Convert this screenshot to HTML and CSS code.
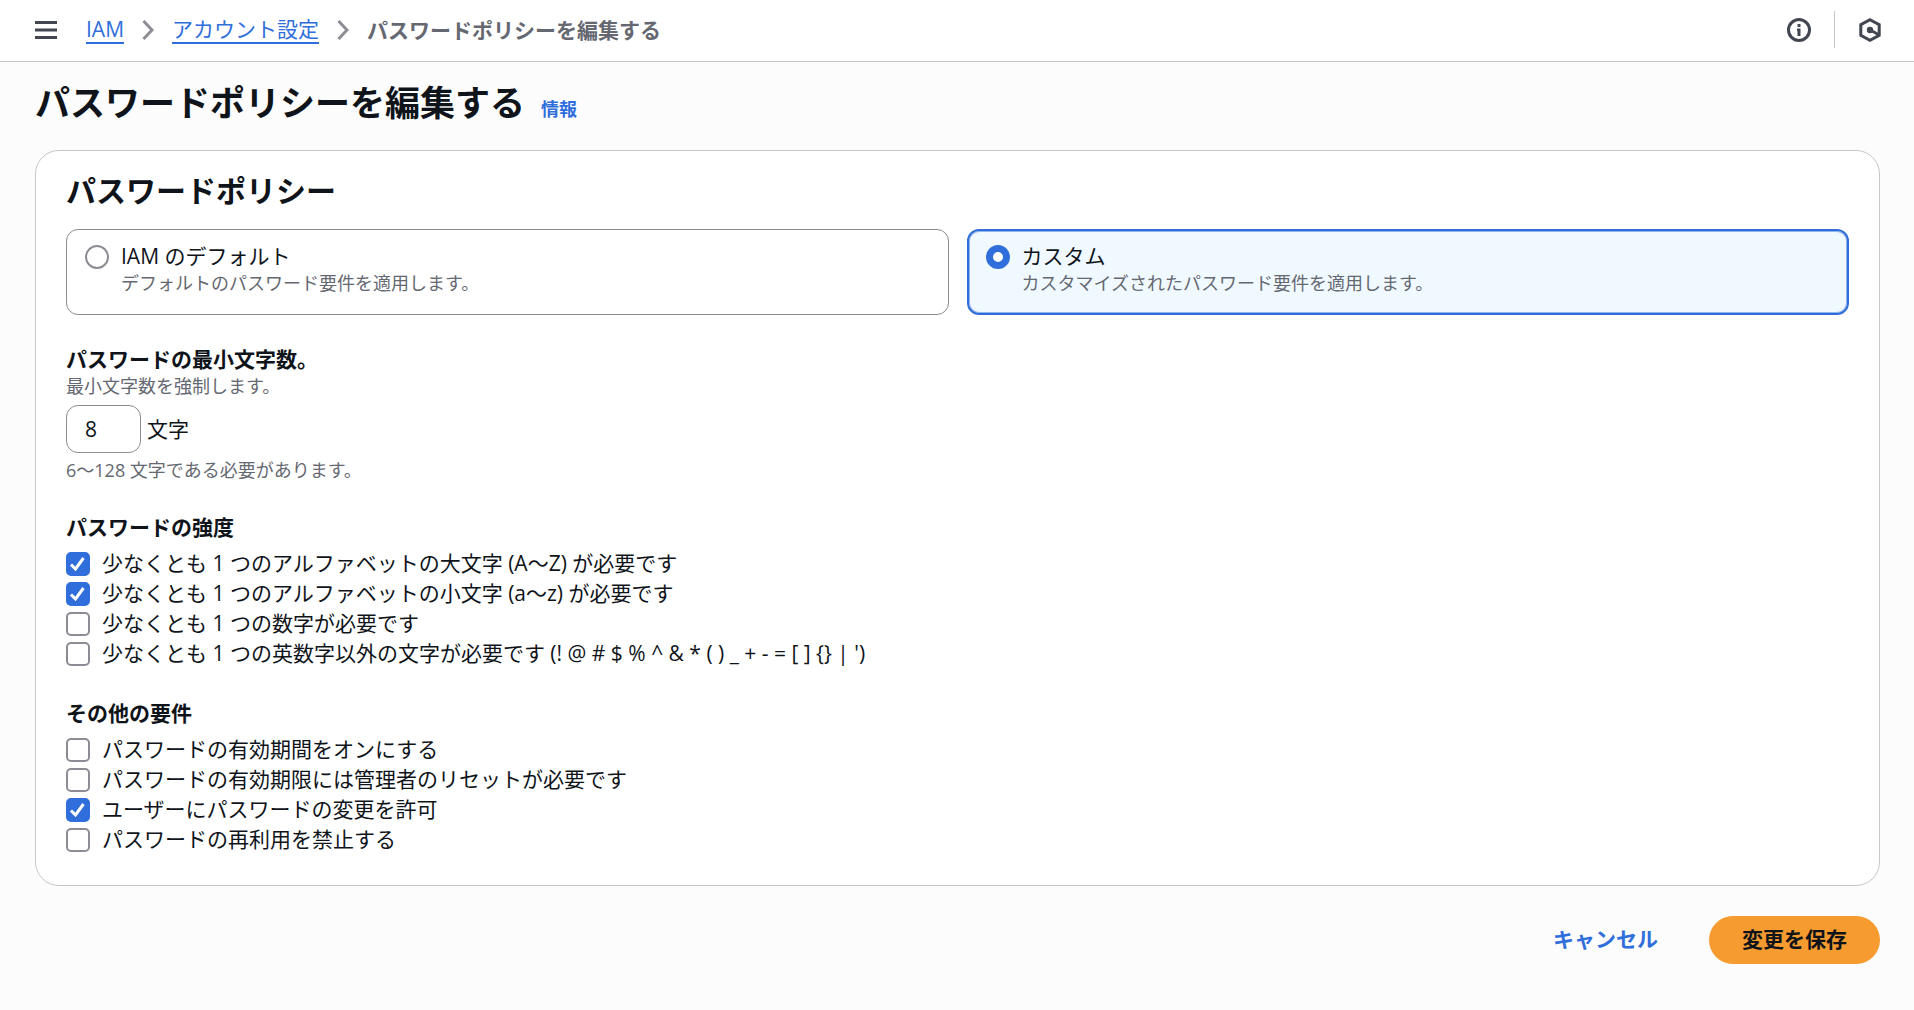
FILE: index.html
```html
<!DOCTYPE html>
<html lang="ja">
	<head>
		<meta charset="utf-8" />
		<title>パスワードポリシーを編集する</title>
		<link rel="stylesheet" href="styles.css">
	</head>
	<body>
		<header class="topbar">
			<button class="icon-btn" type="button" aria-label="メニュー">
				<svg width="22" height="24" viewBox="0 0 22 24"><path d="M0 4.5h22M0 12h22M0 19.5h22" stroke="currentColor" stroke-width="3"/></svg>
			</button>
			<nav class="breadcrumb">
				<a href="#">IAM</a>
				<svg class="chevron" width="12" height="20" viewBox="0 0 12 20"><path d="M1.5 1l8.5 9-8.5 9" fill="none" stroke="currentColor" stroke-width="3"/></svg>
				<a href="#">アカウント設定</a>
				<svg class="chevron" width="12" height="20" viewBox="0 0 12 20"><path d="M1.5 1l8.5 9-8.5 9" fill="none" stroke="currentColor" stroke-width="3"/></svg>
				<span class="current">パスワードポリシーを編集する</span>
			</nav>
			<div class="tools">
				<button class="icon-btn" type="button" aria-label="情報">
					<svg width="24" height="24" viewBox="0 0 24 24"><circle cx="12" cy="12" r="10.5" fill="none" stroke="currentColor" stroke-width="3"/><path d="M10.5 6h3v3h-3zM10 10.5h3.5V18h-3v-5H10z" fill="currentColor"/></svg>
				</button>
				<span class="divider"></span>
				<button class="icon-btn" type="button" aria-label="アシスタント">
					<svg width="24" height="24" viewBox="0 0 24 24"><path d="M12 1.7l9.2 5v10.6l-9.2 5-9.2-5V6.7z" fill="none" stroke="currentColor" stroke-width="3"/><circle cx="12" cy="12" r="3.2" fill="currentColor"/><path d="M12 12l8.5 4.5" stroke="currentColor" stroke-width="3"/></svg>
				</button>
			</div>
		</header>

		<main class="content">
			<div class="page-title">
				<h1>パスワードポリシーを編集する</h1>
				<a href="#">情報</a>
			</div>

			<form>
				<section class="card">
					<h2>パスワードポリシー</h2>

					<div class="tiles">
						<label class="tile">
							<input class="radio" type="radio" name="policy" />
							<span class="tile-text">
								<span>IAM のデフォルト</span>
								<span class="hint">デフォルトのパスワード要件を適用します。</span>
							</span>
						</label>
						<label class="tile selected">
							<input class="radio" type="radio" name="policy" checked />
							<span class="tile-text">
								<span>カスタム</span>
								<span class="hint">カスタマイズされたパスワード要件を適用します。</span>
							</span>
						</label>
					</div>

					<div class="field">
						<label class="field-label" for="min-length">パスワードの最小文字数。</label>
						<p class="hint">最小文字数を強制します。</p>
						<div class="length-row">
							<input class="length-input" id="min-length" type="text" inputmode="numeric" value="8" />
							<span>文字</span>
						</div>
						<p class="hint">6～128 文字である必要があります。</p>
					</div>

					<fieldset class="field">
						<legend class="field-label">パスワードの強度</legend>
						<div class="checks">
							<label class="check"><input type="checkbox" checked /><span>少なくとも 1 つのアルファベットの大文字 (A～Z) が必要です</span></label>
							<label class="check"><input type="checkbox" checked /><span>少なくとも 1 つのアルファベットの小文字 (a～z) が必要です</span></label>
							<label class="check"><input type="checkbox" /><span>少なくとも 1 つの数字が必要です</span></label>
							<label class="check"><input type="checkbox" /><span>少なくとも 1 つの英数字以外の文字が必要です (! @ # $ % ^ &amp; * ( ) _ + - = [ ] {} | ')</span></label>
						</div>
					</fieldset>

					<fieldset class="field">
						<legend class="field-label">その他の要件</legend>
						<div class="checks">
							<label class="check"><input type="checkbox" /><span>パスワードの有効期間をオンにする</span></label>
							<label class="check"><input type="checkbox" /><span>パスワードの有効期限には管理者のリセットが必要です</span></label>
							<label class="check"><input type="checkbox" checked /><span>ユーザーにパスワードの変更を許可</span></label>
							<label class="check"><input type="checkbox" /><span>パスワードの再利用を禁止する</span></label>
						</div>
					</fieldset>
				</section>

				<div class="actions">
					<button class="btn btn-link" type="button">キャンセル</button>
					<button class="btn btn-primary" type="submit">変更を保存</button>
				</div>
			</form>
		</main>
	</body>
</html>
```

FILE: styles.css
```css
*{
	box-sizing: border-box;
	margin: 0;
	padding: 0;
}

body{
	background-color: #fcfcfd;
	color: #0f141a;
	font-family: "Open Sans", "Noto Sans CJK JP", sans-serif;
	font-size: 21px;
	line-height: 30px;
}

a{
	color: #2f6edb;
	text-decoration: none;
}

svg{
	display: block;
}

input,button{
	font: inherit;
	color: inherit;
}

/* top bar */
.topbar{
	display: flex;
	align-items: center;
	height: 62px;
	padding: 0 32px 2px 35px;
	border-bottom: 1px solid #c6c6cd;
	background-color: #fff;
}

.icon-btn{
	border: none;
	background: none;
	color: #424650;
	cursor: pointer;
}

.breadcrumb{
	display: flex;
	align-items: center;
	gap: 18px;
	margin-left: 29px;
}

.breadcrumb a{
	line-height: 26px;
	border-bottom: 2px solid #2f6edb;
}

.chevron{
	color: #8c8c94;
}

.current{
	color: #656871;
	font-weight: 700;
}

.tools{
	display: flex;
	align-items: center;
	gap: 23px;
	margin-left: auto;
}

.divider{
	width: 1px;
	height: 37px;
	background-color: #c6c6cd;
}

/* page */
.content{
	padding: 18px 34px 46px 35px;
}

.page-title{
	display: flex;
	align-items: baseline;
	gap: 16px;
	margin-bottom: 24px;
}

.page-title h1{
	font-size: 35px;
	line-height: 46px;
}

.page-title a{
	font-size: 18px;
	font-weight: 700;
	line-height: 24px;
}

.card{
	padding: 22px 30px 31px;
	border: 1px solid #c6c6cd;
	border-radius: 24px;
	background-color: #fff;
}

.card h2{
	margin-bottom: 20px;
	font-size: 30px;
	line-height: 36px;
}

.tiles{
	display: grid;
	grid-template-columns: 1fr 1fr;
	gap: 18px;
	margin-bottom: 29px;
}

.tile{
	display: flex;
	gap: 12px;
	padding: 11px 18px 19px;
	border: 1px solid #8c8c94;
	border-radius: 12px;
	cursor: pointer;
}

.tile.selected{
	padding: 10px 17px 18px;
	border: 2px solid #2f6edb;
	background-color: #f0f9ff;
	box-shadow: inset 0 0 0 1px #8fb4ee;
}

.tile-text{
	display: flex;
	flex-direction: column;
}

.hint{
	color: #656871;
	font-size: 18px;
	line-height: 24px;
}

.radio{
	appearance: none;
	flex: none;
	width: 24px;
	height: 24px;
	margin-top: 4px;
	border: 2px solid #8c8c94;
	border-radius: 50%;
	background-color: #fff;
}

.radio:checked{
	border: 7px solid #2f6edb;
}

/* form fields */
.field{
	border: none;
}

.field + .field{
	margin-top: 30px;
}

.field-label{
	display: block;
	font-weight: 700;
}

.length-row{
	display: flex;
	align-items: center;
	gap: 6px;
	margin: 7px 0 5px;
}

.length-input{
	width: 75px;
	height: 48px;
	padding: 0 18px;
	border: 1px solid #8c8c94;
	border-radius: 12px;
	background-color: #fff;
}

.checks{
	display: flex;
	flex-direction: column;
	align-items: flex-start;
	margin-top: 6px;
}

.check{
	display: flex;
	gap: 12px;
	cursor: pointer;
}

.check input{
	appearance: none;
	flex: none;
	width: 24px;
	height: 24px;
	margin-top: 4px;
	border: 2px solid #8c8c94;
	border-radius: 5px;
	background-color: #fff;
}

.check input:checked{
	border-color: #2f6edb;
	background: #2f6edb url("data:image/svg+xml,%3Csvg xmlns='http://www.w3.org/2000/svg' viewBox='0 0 20 20'%3E%3Cpath d='M3 10.5l4.5 4.5 8-11' fill='none' stroke='white' stroke-width='3'/%3E%3C/svg%3E") center / 20px no-repeat;
}

/* buttons */
.actions{
	display: flex;
	justify-content: flex-end;
	gap: 18px;
	margin-top: 30px;
}

.btn{
	height: 48px;
	padding: 0 33px 2px;
	border: none;
	border-radius: 24px;
	font-weight: 700;
	cursor: pointer;
}

.btn-link{
	background: none;
	color: #2f6edb;
}

.btn-primary{
	background-color: #f59b30;
}
```
